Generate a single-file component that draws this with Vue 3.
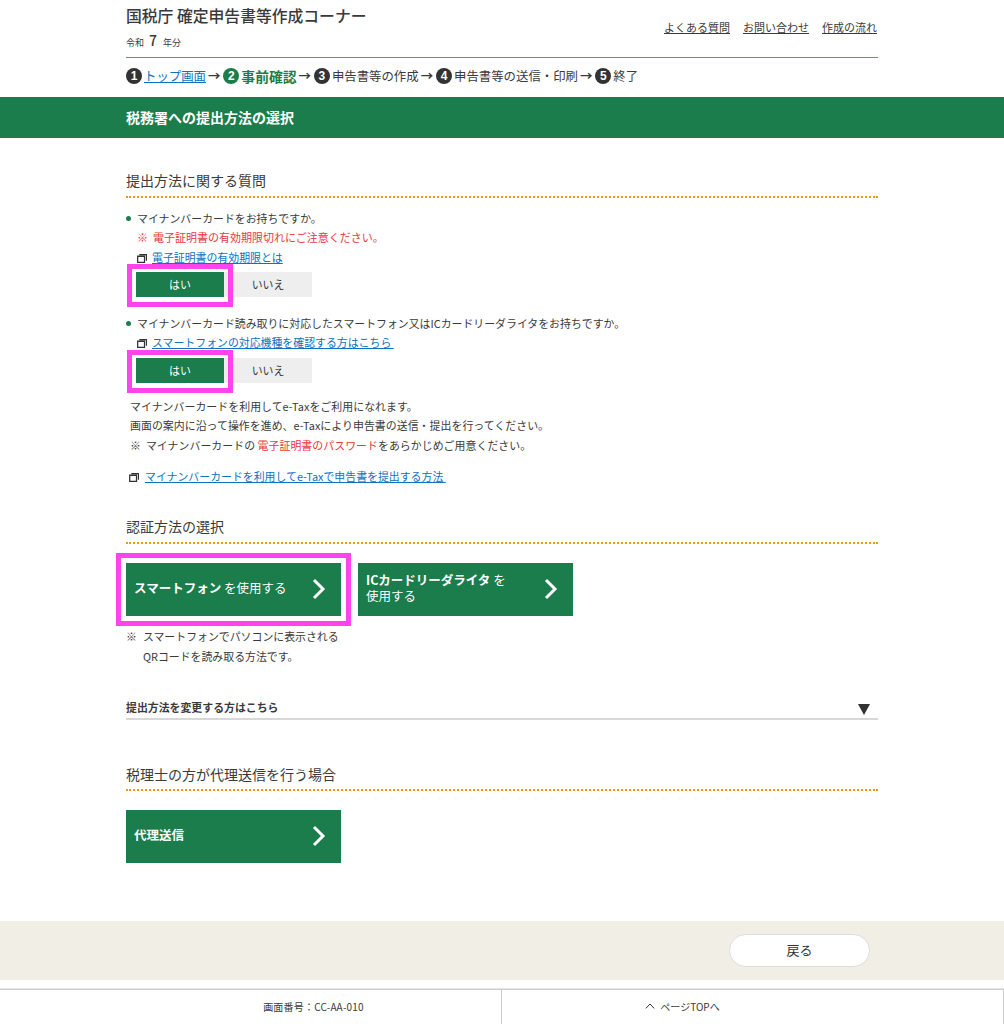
<script setup>
const steps = [
  { n: 1, label: 'トップ画面', kind: 'link' },
  { n: 2, label: '事前確認', kind: 'current' },
  { n: 3, label: '申告書等の作成', kind: '' },
  { n: 4, label: '申告書等の送信・印刷', kind: '' },
  { n: 5, label: '終了', kind: '' },
]
const topLinks = ['よくある質問', 'お問い合わせ', '作成の流れ']
</script>

<template>
  <div class="page">
    <header class="wrap head">
      <div>
        <div class="title">国税庁 確定申告書等作成コーナー</div>
        <div class="year">令和<b>7</b>年分</div>
      </div>
      <nav class="toplinks">
        <a v-for="l in topLinks" :key="l">{{ l }}</a>
      </nav>
    </header>

    <ol class="wrap steps">
      <li v-for="(s, i) in steps" :key="s.n" class="step" :class="s.kind">
        <span v-if="i" class="arrow">→</span>
        <span class="num">{{ s.n }}</span>
        <span class="label">{{ s.label }}</span>
      </li>
    </ol>

    <div class="banner"><div class="wrap">税務署への提出方法の選択</div></div>

    <main class="wrap main">
      <h2 class="sec first">提出方法に関する質問</h2>

      <p class="q q1"><i class="dot"></i>マイナンバーカードをお持ちですか。</p>
      <p class="red ind">※&nbsp;&nbsp;電子証明書の有効期限切れにご注意ください。</p>
      <p class="lnk ind">
        <svg class="win" viewBox="0 0 11 10"><path d="M2.5 .8h8v6.7M.7 2.5h7.6v6.8H.7z" fill="none" stroke="#333" stroke-width="1.4"/></svg>
        <a>電子証明書の有効期限とは</a>
      </p>
      <div class="yesno">
        <span class="yes mark">はい</span><span class="no">いいえ</span>
      </div>

      <p class="q q2"><i class="dot"></i>マイナンバーカード読み取りに対応したスマートフォン又はICカードリーダライタをお持ちですか。</p>
      <p class="lnk ind">
        <svg class="win" viewBox="0 0 11 10"><path d="M2.5 .8h8v6.7M.7 2.5h7.6v6.8H.7z" fill="none" stroke="#333" stroke-width="1.4"/></svg>
        <a>スマートフォンの対応機種を確認する方はこちら&nbsp;</a>
      </p>
      <div class="yesno">
        <span class="yes mark">はい</span><span class="no">いいえ</span>
      </div>

      <div class="info">
        <p>マイナンバーカードを利用してe-Taxをご利用になれます。</p>
        <p>画面の案内に沿って操作を進め、e-Taxにより申告書の送信・提出を行ってください。</p>
        <p>※&nbsp;&nbsp;マイナンバーカードの <span class="redtxt">電子証明書のパスワード</span>をあらかじめご用意ください。</p>
      </div>
      <p class="lnk howto">
        <svg class="win" viewBox="0 0 11 10"><path d="M2.5 .8h8v6.7M.7 2.5h7.6v6.8H.7z" fill="none" stroke="#333" stroke-width="1.4"/></svg>
        <a>マイナンバーカードを利用してe-Taxで申告書を提出する方法&nbsp;</a>
      </p>

      <h2 class="sec auth">認証方法の選択</h2>
      <div class="bigrow">
        <button class="big mark2">
          <span class="btxt"><b>スマートフォン</b> を使用する</span>
          <svg class="chev" viewBox="0 0 16 24"><path d="M3 3l9 9-9 9" fill="none" stroke="#fff" stroke-width="3"/></svg>
        </button>
        <button class="big">
          <span class="btxt"><b>ICカードリーダライタ</b> を<br>使用する</span>
          <svg class="chev" viewBox="0 0 16 24"><path d="M3 3l9 9-9 9" fill="none" stroke="#fff" stroke-width="3"/></svg>
        </button>
      </div>
      <div class="note">
        <span>※</span>
        <span>スマートフォンでパソコンに表示される<br>QRコードを読み取る方法です。</span>
      </div>

      <div class="collapse">
        <b>提出方法を変更する方はこちら</b>
        <i class="tri"></i>
      </div>

      <h2 class="sec agent">税理士の方が代理送信を行う場合</h2>
      <button class="big single">
        <span class="btxt"><b>代理送信</b></span>
        <svg class="chev" viewBox="0 0 16 24"><path d="M3 3l9 9-9 9" fill="none" stroke="#fff" stroke-width="3"/></svg>
      </button>
    </main>

    <div class="band">
      <div class="wrap bandin"><button class="back">戻る</button></div>
    </div>

    <footer class="foot">
      <div class="cell left">画面番号：CC-AA-010</div>
      <div class="cell right">
        <svg class="up" viewBox="0 0 10 6"><path d="M.8 5.4L5 1l4.2 4.4" fill="none" stroke="#333" stroke-width="1"/></svg>
        ページTOPへ
      </div>
    </footer>
  </div>
</template>

<style>
html, body { margin: 0; background: #fff; }
</style>

<style scoped>
.page {
  width: 1004px;
  height: 1024px;
  overflow: hidden;
  color: #3a3a3a;
  font-family: "Noto Sans CJK JP", "Liberation Sans", sans-serif;
  font-size: 10.9px;
}
.wrap { width: 752px; margin-left: 126px; }
p, h2, ol { margin: 0; padding: 0; }

.head {
  height: 57px;
  display: flex;
  justify-content: space-between;
  border-bottom: 1px solid #4fa578;
}
.title { font-size: 15.8px; font-weight: 500; line-height: 20px; margin-top: 6px; }
.year { font-size: 9px; line-height: 20px; margin-top: 4px; }
.year b { font-size: 14px; font-weight: 500; margin: 0 6px 0 5px; }
.toplinks { display: flex; gap: 13px; margin: 19px 1px 0 0; line-height: 16px; font-size: 11px; }
.toplinks a { text-decoration: underline; }

.steps {
  list-style: none;
  height: 36px;
  padding-bottom: 3px;
  display: flex;
  align-items: center;
  font-size: 12.4px;
}
.step { display: flex; align-items: center; white-space: nowrap; }
.arrow { font-size: 12.4px; margin: 0 3px 0 2px; font-weight: 700; }
.num {
  width: 16px; height: 16px;
  border-radius: 50%;
  background: #333;
  color: #fff;
  font: 700 12px/16px "Liberation Sans", sans-serif;
  text-align: center;
  margin-right: 2px;
}
.step.link .label { color: #0b72c4; text-decoration: underline; }
.step.current .num { background: #1a7d4b; }
.step.current .label { color: #1a7d4b; font-weight: 700; font-size: 13.8px; }

.banner {
  height: 41px;
  background: #1a7d4b;
  color: #fff;
  font-size: 14px;
  font-weight: 700;
  line-height: 41px;
}

.sec {
  font-size: 14px;
  font-weight: 400;
  line-height: 31px;
  border-bottom: 2px dotted #f39800;
}
.sec.first { margin-top: 27px; }
.sec.auth { margin-top: 25px; }
.sec.agent { margin-top: 39px; line-height: 30px; }

.q { line-height: 20px; display: flex; align-items: center; }
.q1 { margin-top: 10px; }
.q2 { margin-top: 16px; }
.dot {
  width: 5px; height: 5px;
  border-radius: 50%;
  background: #1a7d4b;
  margin-right: 6px;
}
.ind { padding-left: 11px; line-height: 19.5px; }
.red { color: #e8383d; font-size: 11px; }
.redtxt { color: #e8383d; }
.lnk { display: flex; align-items: center; }
.lnk a { color: #0b72c4; text-decoration: underline; }
.win { width: 10px; height: 9px; margin-right: 5px; flex: none; margin-top: 2px; }

.yesno { display: flex; margin: 5px 0 0 10px; height: 25px; }
.yes, .no {
  width: 88px;
  line-height: 25px;
  text-align: center;
}
.yes { background: #1a7d4b; color: #fff; position: relative; }
.no { background: #eee; }
.mark::after {
  content: "";
  position: absolute;
  left: -9px; right: -9px; top: -8px; bottom: -10px;
  border: 5px solid #ff44ee;
  pointer-events: none;
}

.info { margin: 14px 0 0 4px; line-height: 19.6px; letter-spacing: .05px; }
.howto { margin: 11px 0 0 3px; line-height: 20px; }
.howto .win { margin-right: 6px; }

.bigrow { display: flex; gap: 17px; margin-top: 19px; }
.big {
  width: 215px;
  height: 53px;
  padding: 0 14px 0 8px;
  border: 0;
  background: #1a7d4b;
  color: #fff;
  font: inherit;
  font-size: 12.5px;
  line-height: 16px;
  text-align: left;
  display: flex;
  align-items: center;
  justify-content: space-between;
  position: relative;
}
.btxt { padding-bottom: 3px; }
.chev { width: 16px; height: 24px; flex: none; margin-bottom: 2px; }
.mark2::after {
  content: "";
  position: absolute;
  inset: -10px;
  border: 5px solid #ff44ee;
  pointer-events: none;
}
.single { margin-top: 19px; }

.note {
  display: flex;
  gap: 6px;
  margin-top: 10px;
  line-height: 20px;
}

.collapse {
  margin-top: 29px;
  height: 23px;
  border-bottom: 2px solid #d8d8d8;
  display: flex;
  justify-content: space-between;
  align-items: center;
}
.tri {
  width: 0; height: 0;
  border-left: 6px solid transparent;
  border-right: 6px solid transparent;
  border-top: 11px solid #333;
  margin: 5px 8px 0 0;
}

.band { margin-top: 58px; height: 59px; background: #f1efe5; }
.bandin { display: flex; justify-content: flex-end; padding-top: 13px; }
.back {
  width: 141px;
  height: 33px;
  margin-right: 8px;
  padding-bottom: 3px;
  background: #fff;
  border: 1px solid #ddd;
  border-radius: 17px;
  font: inherit;
  font-size: 13px;
  color: #333;
}

.foot {
  margin-top: 9px;
  height: 35px;
  display: flex;
  border-top: 1px solid #ccc;
  box-shadow: 0 -1px 0 #e6e6e6;
  font-size: 10px;
}
.cell {
  width: 50%;
  box-sizing: border-box;
  display: flex;
  align-items: center;
  justify-content: center;
  gap: 5px;
  border-right: 1px solid #ccc;
  padding-bottom: 3px;
}
.cell.left { padding-left: 126px; letter-spacing: .2px; }
.cell.right { padding-right: 140px; }
.up { width: 10px; height: 6px; }
</style>
